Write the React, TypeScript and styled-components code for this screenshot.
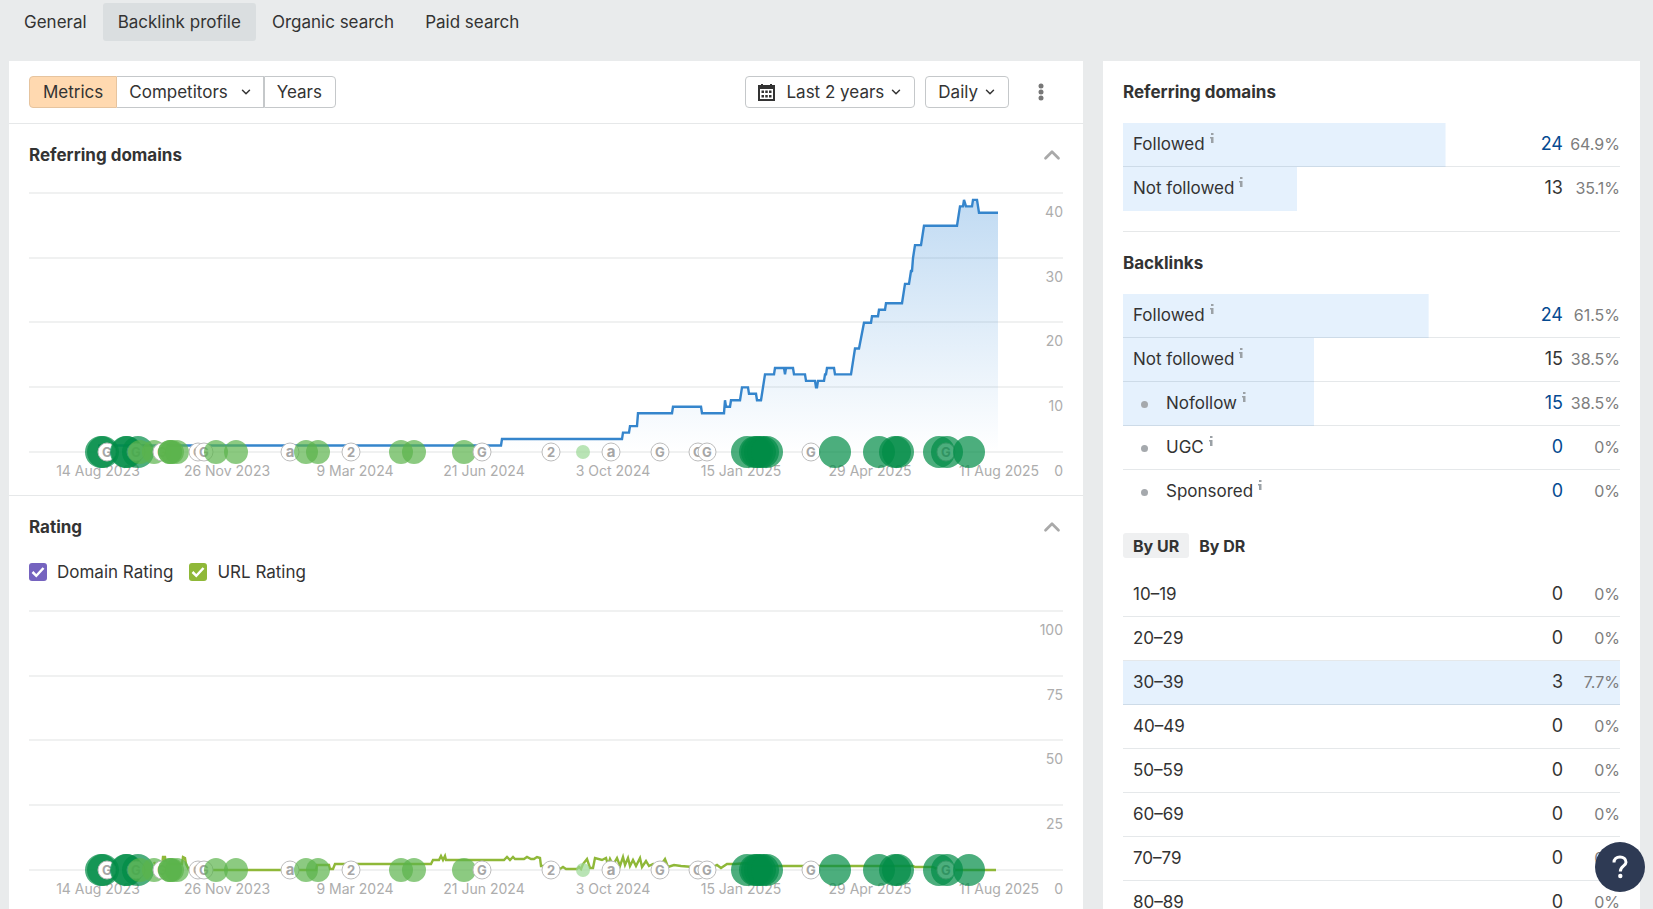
import React from 'react';
import styled, { createGlobalStyle } from 'styled-components';
import { ChevronDown, ChevronUp } from 'lucide-react';

const GlobalStyle = createGlobalStyle`
  *, *::before, *::after { box-sizing: border-box; }
  body { margin: 0; background: #e9ebec; color: #333; font-family: Inter, "Liberation Sans", sans-serif; font-size: 17px; line-height: 24px; }
  button, input { font: inherit; color: inherit; margin: 0; }
  h2, p { margin: 0; }
`;

const Page = styled.div`
  height: 100vh;
  overflow: hidden;
  padding: 3px 13px 0 9px;
`;

const Tabs = styled.nav`
  display: flex;
  gap: 1px;
  margin-bottom: 20px;
`;

const Tab = styled.a<{ $active?: boolean }>`
  padding: 7px 15px;
  border-radius: 3px;
  color: #333;
  text-decoration: none;
  background: ${(p) => (p.$active ? '#dadee0' : 'transparent')};
`;

const Columns = styled.main`
  display: grid;
  grid-template-columns: 2fr 1fr;
  gap: 20px;
  align-items: start;
`;

const Panel = styled.section`
  min-width: 0;
  background: #fff;
`;

const Toolbar = styled.div`
  display: flex;
  align-items: center;
  gap: 10px;
  padding: 15px 20px;
  border-bottom: 1px solid #e6e8e9;
`;

const Group = styled.div`
  display: flex;
  margin-right: auto;
`;

const Button = styled.button`
  display: flex;
  align-items: center;
  height: 32px;
  padding: 0 11px 0 12px;
  gap: 5px;
  background: #fff;
  border: 1px solid #c5c8ca;
  border-radius: 4px;
  white-space: nowrap;
`;

const Segment = styled(Button)<{ $active?: boolean }>`
  padding-right: 10px;
  gap: 11px;
  border-radius: 0;
  background: ${(p) => (p.$active ? '#ffd9b0' : '#fff')};
  border-color: ${(p) => (p.$active ? '#e6c49f' : '#c5c8ca')};
  & + & { border-left-width: 0; }
  &:first-child { padding: 0 13px; border-radius: 4px 0 0 4px; }
  &:last-child { padding: 0 13px 0 12px; border-left-width: 1px; border-radius: 0 4px 4px 0; }
`;

const ButtonIcon = styled.svg`
  margin-right: 6px;
`;

const IconButton = styled.button`
  display: flex;
  align-items: center;
  justify-content: center;
  width: 24px;
  height: 32px;
  padding: 0;
  border: 0;
  background: none;
  color: #777;
`;

const MoreButton = styled(IconButton)`
  margin: 0 10px;
`;

const ChartSection = styled.section`
  padding: 19px 20px 12px;
  & + & { border-top: 1px solid #e6e8e9; }
`;

const SectionHead = styled.div`
  display: flex;
  justify-content: space-between;
  align-items: center;
  height: 24px;
`;

const Title = styled.h2`
  font-size: 17px;
  line-height: 24px;
  font-weight: 700;
  color: #333;
`;

const CollapseButton = styled(IconButton)`
  width: 22px;
  color: #a9a9a9;
  svg { flex: none; }
`;

const Legend = styled.div`
  display: flex;
  gap: 16px;
  margin-top: 21px;
  padding-bottom: 1px;
`;

const LegendItem = styled.label`
  display: flex;
  align-items: center;
  gap: 10px;
`;

const CheckWrap = styled.span`
  display: grid;
  & > * { grid-area: 1 / 1; }
  svg { pointer-events: none; }
`;

const CheckInput = styled.input<{ $color: string }>`
  appearance: none;
  width: 18px;
  height: 18px;
  border-radius: 3px;
  background: ${(p) => p.$color};
`;

const Plot = styled.svg`
  display: block;
  width: 100%;
  height: auto;
  margin-top: 25px;
  overflow: visible;
`;

const SidePanel = styled(Panel)`
  padding: 19px 20px 0;
`;

const Divider = styled.hr`
  margin: 20px 0 19px;
  border: 0;
  border-top: 1px solid #e6e8e9;
`;

const Table = styled.table`
  width: 100%;
  margin-top: 19px;
  border-collapse: collapse;
  border-radius: 2px;
`;

const Row = styled.tr<{ $share: number }>`
  height: 44px;
  background: linear-gradient(#e5f1fd, #e5f1fd) 0 0 / ${(p) => p.$share}% 100% no-repeat;
  box-shadow: inset 0 -1px 0 rgba(0, 30, 50, 0.1);
  &:last-child { box-shadow: none; }
`;

const NameCell = styled.th`
  padding: 0 0 3px 10px;
  font-weight: 400;
  text-align: left;
`;

const CountCell = styled.td`
  padding: 0 0 3px;
  font-size: 18px;
  text-align: right;
`;

const CountLink = styled.a`
  color: #054a91;
  text-decoration: none;
`;

const PercentCell = styled.td`
  width: 57px;
  padding: 0 0 2px;
  color: #7d7d7d;
  font-size: 16px;
  text-align: right;
`;

const Bullet = styled.span`
  display: inline-block;
  width: 7px;
  height: 7px;
  margin: 0 18px 0 8px;
  border-radius: 50%;
  background: #a5a9ad;
  vertical-align: 1px;
`;

const Info = styled.svg`
  margin-left: 5px;
  vertical-align: 7px;
`;

const SmallTabs = styled.div`
  display: flex;
  margin-top: 19px;
`;

const SmallTab = styled.button<{ $active?: boolean }>`
  padding: 0 10px;
  height: 25px;
  border: 0;
  border-radius: 3px;
  font-size: 16px;
  font-weight: 700;
  background: ${(p) => (p.$active ? '#eff0f1' : 'transparent')};
`;

const RangeTable = styled(Table)`
  margin-top: 15px;
`;

const HelpButton = styled.button`
  position: fixed;
  right: 8px;
  bottom: 17px;
  display: flex;
  align-items: center;
  justify-content: center;
  width: 50px;
  height: 50px;
  padding: 0;
  border: 0;
  border-radius: 50%;
  background: #2e3a54;
`;

type Point = [number, number];

const BASE = 260;

/* Referring domains: [x, count] */
const domains: Point[] = [
  [69, 1], [472, 1], [473, 2], [593, 2], [594, 3], [600, 3], [601, 4], [608, 4], [609, 6], [643, 6],
  [644, 7], [672, 7], [673, 6], [695, 6], [696, 8], [697, 7], [701, 7], [702, 8], [711, 8], [713, 10],
  [719, 10], [720, 9], [727, 9], [728, 8], [732, 8], [736, 12], [745, 12], [746, 13], [755, 13], [756, 12],
  [757, 13], [764, 13], [765, 12], [776, 12], [777, 11], [786, 11], [787, 10], [788, 10], [789, 11],
  [795, 11], [796, 12], [797, 12], [798, 13], [805, 13], [806, 12], [822, 12], [826, 16], [830, 16],
  [835, 20], [842, 20], [843, 21], [849, 21], [850, 22], [856, 22], [857, 23], [873, 23], [876, 26],
  [880, 26], [882, 28], [883, 28], [884, 30], [886, 32], [892, 32], [895, 35], [928, 35], [931, 38],
  [934, 38], [935, 39], [937, 38], [943, 38], [944, 39], [948, 39], [950, 37], [969, 37],
];

/* URL rating: [x, pixels above the base line] */
const rating: Point[] = [
  [125, 8], [127, 4], [133, 4], [134, 13], [136, 13], [137, 6], [153, 6], [154, 13], [156, 12], [157, 6],
  [160, 0], [287, 0],
  [288, 5], [300, 5], [301, 1], [304, 1], [306, 6], [402, 6], [404, 10], [410, 10], [412, 14], [414, 10],
  [416, 14], [417, 10], [475, 10], [478, 13], [481, 10], [484, 13], [486, 11], [495, 11], [498, 13],
  [502, 11], [505, 11], [508, 13], [511, 12], [512, 4], [518, 4], [523, 4], [531, 1], [534, 3], [537, 1],
  [548, 1], [550, 3], [552, 1], [554, 6], [558, 11], [561, 2], [564, 2], [566, 12], [573, 10], [577, 12],
  [579, 5], [581, 11], [584, 5], [588, 12], [591, 4], [594, 13], [596, 5], [599, 12], [601, 4], [604, 10],
  [607, 4], [611, 12], [613, 3], [617, 9], [620, 4], [624, 6], [626, 3], [630, 5], [634, 8], [636, 11],
  [639, 3], [645, 5], [652, 4], [664, 3], [667, 5], [670, 2], [673, 6], [676, 3], [680, 5], [684, 3],
  [688, 5], [692, 2], [698, 6], [706, 6], [718, 7], [723, 4], [884, 4], [886, 3], [904, 3], [910, 0], [967, 0],
];

type Marker = { x: number; kind: 'big' | 'mid' | 'small' | 'G' | 'a' | '2' };

const m = (kind: Marker['kind'], ...xs: number[]): Marker[] => xs.map((x) => ({ kind, x }));

const markers: Marker[] = [
  ...m('big', 72, 74), ...m('G', 78), ...m('big', 97, 98), ...m('G', 107), ...m('big', 109),
  ...m('mid', 111, 125), ...m('G', 133), ...m('mid', 141, 141, 143, 148), ...m('G', 169, 175),
  ...m('mid', 187, 207), ...m('a', 261), ...m('mid', 277, 289), ...m('2', 322), ...m('mid', 372, 385, 435),
  ...m('G', 453), ...m('2', 522), ...m('small', 554), ...m('a', 582), ...m('G', 631, 669, 678),
  ...m('big', 718, 726, 728, 731, 734, 738), ...m('G', 782), ...m('big', 806, 850, 866, 869, 910),
  ...m('G', 917), ...m('big', 918, 940),
];

const dots = {
  big: { r: 16, fill: '#008c46' },
  mid: { r: 12, fill: '#5bb34b' },
  small: { r: 7, fill: '#9bd896' },
};

const dates = ['14 Aug 2023', '26 Nov 2023', '9 Mar 2024', '21 Jun 2024', '3 Oct 2024', '15 Jan 2025', '29 Apr 2025', '11 Aug 2025'];

function MarkerDot({ x, kind }: Marker) {
  if (kind === 'big' || kind === 'mid' || kind === 'small') {
    return <circle cx={x} cy={BASE} r={dots[kind].r} fill={dots[kind].fill} fillOpacity={0.7} />;
  }
  return (
    <g>
      <circle cx={x} cy={BASE} r={9} fill="#fff" stroke="#bdbdbd" />
      <text x={x} y={BASE + 5} textAnchor="middle" fontSize={kind === 'a' ? 15 : 13} fontWeight={700} fill="#a6a6a6">{kind}</text>
    </g>
  );
}

function Chart({ name, points, color, labels, fill }: { name: string; points: Point[]; color: string; labels: string[]; fill?: boolean }) {
  const path = points.map(([x, y]) => `${x},${y}`).join(' ');
  const first = points[0][0];
  const last = points[points.length - 1][0];
  return (
    <Plot viewBox="0 0 1034 291" role="img" aria-label={name}>
      <defs>
        <linearGradient id="area" x1="0" y1="0" x2="0" y2="1">
          <stop offset="0" stopColor="#2f86d6" stopOpacity="0.3" />
          <stop offset="1" stopColor="#2f86d6" stopOpacity="0" />
        </linearGradient>
      </defs>
      {labels.map((label, i) => (
        <g key={label}>
          <rect x={0} y={Math.round(i * 64.67)} width={1034} height={2} fill="#f0f1f1" />
          <text x={1034} y={i === 4 ? 284 : Math.round(25 + i * 64.67)} textAnchor="end" fontSize={14} fill="#adadad">{label}</text>
        </g>
      ))}
      {dates.map((date, i) => (
        <text key={date} x={Math.round(69 + i * 128.66)} y={284} textAnchor="middle" fontSize={14} fill="#adadad">{date}</text>
      ))}
      {fill && <polygon points={`${first},${BASE} ${path} ${last},${BASE}`} fill="url(#area)" />}
      <polyline points={path} fill="none" stroke={color} strokeWidth={2.4} />
      {markers.map((marker, i) => <MarkerDot key={i} {...marker} />)}
    </Plot>
  );
}

const domainPoints = domains.map(([x, v]): Point => [x, BASE - v * 6.465]);
const ratingPoints = rating.map(([x, v]): Point => [x, BASE - v]);

type Entry = { name: string; count: number; percent: string; share?: number; link?: boolean; nested?: boolean; info?: boolean };

function Rows({ entries }: { entries: Entry[] }) {
  return (
    <tbody>
      {entries.map((e) => (
        <Row key={e.name} $share={e.share ?? 0}>
          <NameCell scope="row">
            {e.nested && <Bullet />}
            {e.name}
            {e.info && (
              <Info width="4" height="10" viewBox="0 0 4 10" fill="#9ba1a6" aria-hidden="true">
                <path d="M1 0h2.500v2H1zM0 4h3.500v6H1V5.500H0z" />
              </Info>
            )}
          </NameCell>
          <CountCell>{e.link ? <CountLink href="#links">{e.count}</CountLink> : e.count}</CountCell>
          <PercentCell>{e.percent}</PercentCell>
        </Row>
      ))}
    </tbody>
  );
}

const domainRows: Entry[] = [
  { name: 'Followed', count: 24, percent: '64.9%', share: 64.9, link: true, info: true },
  { name: 'Not followed', count: 13, percent: '35.1%', share: 35.1, info: true },
];

const backlinkRows: Entry[] = [
  { name: 'Followed', count: 24, percent: '61.5%', share: 61.5, link: true, info: true },
  { name: 'Not followed', count: 15, percent: '38.5%', share: 38.5, info: true },
  { name: 'Nofollow', count: 15, percent: '38.5%', share: 38.5, link: true, nested: true, info: true },
  { name: 'UGC', count: 0, percent: '0%', link: true, nested: true, info: true },
  { name: 'Sponsored', count: 0, percent: '0%', link: true, nested: true, info: true },
];

const rangeRows: Entry[] = ['10–19', '20–29', '30–39', '40–49', '50–59', '60–69', '70–79', '80–89'].map((name) =>
  name === '30–39' ? { name, count: 3, percent: '7.7%', share: 100 } : { name, count: 0, percent: '0%' },
);

function CalendarIcon() {
  return (
    <ButtonIcon width="17" height="17" viewBox="0 0 17 17" aria-hidden="true">
      <path fill="#333" d="M0 1h3V0h2v1h7V0h2v1h3v16H0z" />
      <path fill="#fff" d="M2 5h13v10H2z" />
      <path fill="#333" d="M3.500 6.500H6V9H3.500zM7.250 6.500h2.500V9h-2.500zM11 6.500h2.500V9H11zM3.500 11H6v2.500H3.500zM7.250 11h2.500v2.500h-2.500zM11 11h2.500v2.500H11z" />
    </ButtonIcon>
  );
}

function Checkbox({ label, color }: { label: string; color: string }) {
  return (
    <LegendItem>
      <CheckWrap>
        <CheckInput type="checkbox" defaultChecked $color={color} />
        <svg width="18" height="18" viewBox="0 0 18 18" fill="none" stroke="#fff" strokeWidth="2.500" aria-hidden="true">
          <path d="M3.500 9l3.800 3.800L14.500 5" />
        </svg>
      </CheckWrap>
      {label}
    </LegendItem>
  );
}

function Collapse() {
  return (
    <CollapseButton aria-label="Collapse">
      <ChevronUp size={26} strokeWidth={2.5} />
    </CollapseButton>
  );
}

export default function App() {
  return (
    <Page>
      <GlobalStyle />
      <Tabs>
        <Tab href="#general">General</Tab>
        <Tab href="#backlinks" $active>Backlink profile</Tab>
        <Tab href="#organic">Organic search</Tab>
        <Tab href="#paid">Paid search</Tab>
      </Tabs>
      <Columns>
        <Panel>
          <Toolbar>
            <Group>
              <Segment $active>Metrics</Segment>
              <Segment>Competitors <ChevronDown size={14} strokeWidth={2.5} /></Segment>
              <Segment>Years</Segment>
            </Group>
            <Button><CalendarIcon /> Last 2 years <ChevronDown size={14} strokeWidth={2.5} /></Button>
            <Button>Daily <ChevronDown size={14} strokeWidth={2.5} /></Button>
            <MoreButton aria-label="More">
              <svg width="6" height="18" viewBox="0 0 6 18" fill="currentColor" aria-hidden="true">
                <circle cx="3" cy="3" r="2.500" /><circle cx="3" cy="9" r="2.500" /><circle cx="3" cy="15" r="2.500" />
              </svg>
            </MoreButton>
          </Toolbar>
          <ChartSection>
            <SectionHead><Title>Referring domains</Title><Collapse /></SectionHead>
            <Chart name="Referring domains" points={domainPoints} color="#3585cc" labels={['40', '30', '20', '10', '0']} fill />
          </ChartSection>
          <ChartSection>
            <SectionHead><Title>Rating</Title><Collapse /></SectionHead>
            <Legend>
              <Checkbox label="Domain Rating" color="#7563bf" />
              <Checkbox label="URL Rating" color="#8fb838" />
            </Legend>
            <Chart name="Rating" points={ratingPoints} color="#8fb838" labels={['100', '75', '50', '25', '0']} />
          </ChartSection>
        </Panel>
        <SidePanel>
          <Title>Referring domains</Title>
          <Table><Rows entries={domainRows} /></Table>
          <Divider />
          <Title>Backlinks</Title>
          <Table><Rows entries={backlinkRows} /></Table>
          <SmallTabs>
            <SmallTab $active>By UR</SmallTab>
            <SmallTab>By DR</SmallTab>
          </SmallTabs>
          <RangeTable><Rows entries={rangeRows} /></RangeTable>
        </SidePanel>
      </Columns>
      <HelpButton aria-label="Help">
        <svg width="16" height="24" viewBox="0 0 16 24" fill="none" stroke="#fff" strokeWidth="3" aria-hidden="true">
          <path d="M2 7.500C2 4 4.500 2 8 2s6 2 6 5.300C14 11 8.300 11 8.300 16.500" />
          <circle cx="8.300" cy="21" r="2.200" fill="#fff" stroke="none" />
        </svg>
      </HelpButton>
    </Page>
  );
}
